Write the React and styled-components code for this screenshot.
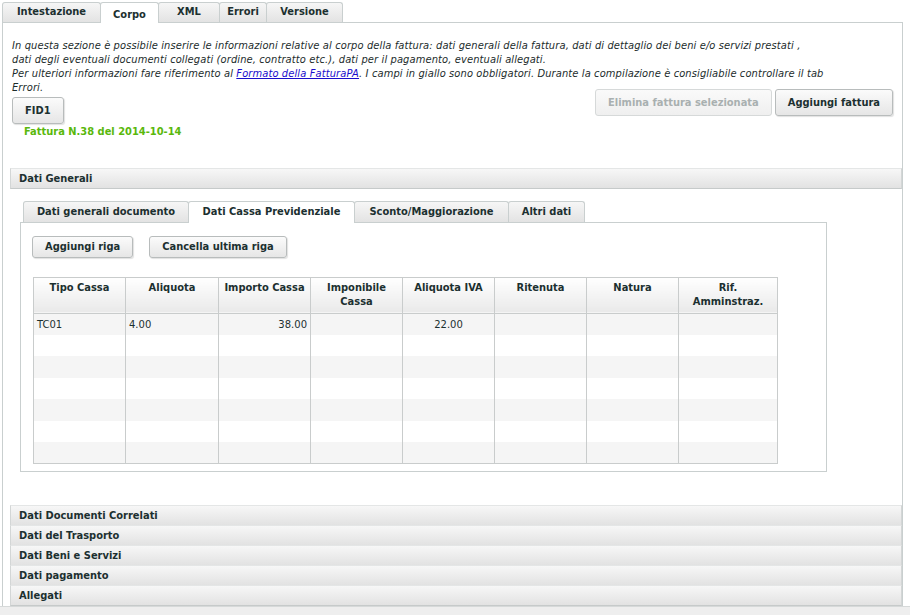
import React from 'react'
import styled, { createGlobalStyle, css } from 'styled-components'

const GlobalStyle = createGlobalStyle`
  body {
    margin: 0;
    background: #ffffff;
    font-family: "DejaVu Sans Condensed", "DejaVu Sans", Verdana, sans-serif;
    font-size: 11px;
    color: #1c3030;
  }
`

const topTabs = [
  { label: 'Intestazione', width: 99 },
  { label: 'Corpo', width: 59 },
  { label: 'XML', width: 62 },
  { label: 'Errori', width: 48 },
  { label: 'Versione', width: 77 },
]

const innerTabs = [
  { label: 'Dati generali documento', width: 166 },
  { label: 'Dati Cassa Previdenziale', width: 167 },
  { label: 'Sconto/Maggiorazione', width: 155 },
  { label: 'Altri dati', width: 77 },
]

const sections = ['Dati Documenti Correlati', 'Dati del Trasporto', 'Dati Beni e Servizi', 'Dati pagamento', 'Allegati']

const columns = [
  { label: 'Tipo Cassa', width: 92, align: 'left' },
  { label: 'Aliquota', width: 93, align: 'left' },
  { label: 'Importo Cassa', width: 92, align: 'right' },
  { label: 'Imponibile\nCassa', width: 92, align: 'center' },
  { label: 'Aliquota IVA', width: 92, align: 'center' },
  { label: 'Ritenuta', width: 92, align: 'center' },
  { label: 'Natura', width: 92, align: 'center' },
  { label: 'Rif.\nAmminstraz.', width: 99, align: 'center' },
]

const rows = [
  ['TC01', '4.00', '38.00', '', '22.00', '', '', ''],
  ['', '', '', '', '', '', '', ''],
  ['', '', '', '', '', '', '', ''],
  ['', '', '', '', '', '', '', ''],
  ['', '', '', '', '', '', '', ''],
  ['', '', '', '', '', '', '', ''],
  ['', '', '', '', '', '', '', ''],
]

const App = () => {
  return (
    <Page>
      <GlobalStyle />
      <TabBar>
        {topTabs.map(t => (
          <Tab key={t.label} $width={t.width} $active={t.label === 'Corpo'}>{t.label}</Tab>
        ))}
      </TabBar>
      <MainPanel>
        <Intro>
          In questa sezione è possibile inserire le informazioni relative al corpo della fattura: dati generali della fattura, dati di dettaglio dei beni e/o servizi prestati ,<br />
          dati degli eventuali documenti collegati (ordine, contratto etc.), dati per il pagamento, eventuali allegati.<br />
          Per ulteriori informazioni fare riferimento al <a href="#">Formato della FatturaPA</a>. I campi in giallo sono obbligatori. Durante la compilazione è consigliabile controllare il tab<br />
          Errori.
        </Intro>
        <ActionsRow>
          <InvoiceCol>
            <Button $tall>FID1</Button>
            <InvoiceLabel>Fattura N.38 del 2014-10-14</InvoiceLabel>
          </InvoiceCol>
          <ButtonGroup>
            <Button $tall disabled>Elimina fattura selezionata</Button>
            <Button $tall>Aggiungi fattura</Button>
          </ButtonGroup>
        </ActionsRow>

        <Accordion>
          <AccordionHeader>Dati Generali</AccordionHeader>
          <AccordionBody>
            <InnerTabBar>
              {innerTabs.map(t => (
                <InnerTab key={t.label} $width={t.width} $active={t.label === 'Dati Cassa Previdenziale'}>{t.label}</InnerTab>
              ))}
            </InnerTabBar>
            <TabPanel>
              <ButtonGroup $left>
                <Button>Aggiungi riga</Button>
                <Button>Cancella ultima riga</Button>
              </ButtonGroup>
              <Grid>
                <colgroup>
                  {columns.map(c => (
                    <col key={c.label} style={{ width: c.width }} />
                  ))}
                </colgroup>
                <thead>
                  <tr>
                    {columns.map(c => (
                      <HeadCell key={c.label}>{c.label}</HeadCell>
                    ))}
                  </tr>
                </thead>
                <tbody>
                  {rows.map((r, i) => (
                    <Row key={i} $odd={i % 2 === 0}>
                      {r.map((v, j) => (
                        <Cell key={j} $align={columns[j].align}>{v}</Cell>
                      ))}
                    </Row>
                  ))}
                </tbody>
              </Grid>
            </TabPanel>
          </AccordionBody>
          {sections.map(s => (
            <AccordionHeader key={s}>{s}</AccordionHeader>
          ))}
        </Accordion>
      </MainPanel>
      <Footer />
    </Page>
  )
}

const Page = styled.div`
  width: 910px;
  height: 615px;
  display: flex;
  flex-direction: column;
  overflow: hidden;
`

const tabBase = css`
  display: flex;
  align-items: center;
  justify-content: center;
  box-sizing: border-box;
  font-weight: bold;
  border: 1px solid #c9cfcf;
  border-bottom: none;
  border-radius: 3px 3px 0 0;
  color: #1c3030;
  background: linear-gradient(#f6f6f6, #e3e3e3);
  white-space: nowrap;
`

const TabBar = styled.div`
  display: flex;
  align-items: flex-end;
  height: 22px;
  padding-left: 2px;
  margin-right: 7px;
`

const Tab = styled.div`
  ${tabBase};
  width: ${p => p.$width}px;
  height: 20px;
  padding-bottom: 2px;
  margin-right: -1px;
  ${p => p.$active && css`
    background: #ffffff;
    height: 21px;
    padding-top: 3px;
    padding-bottom: 0;
    margin-bottom: -1px;
    position: relative;
    z-index: 1;
  `}
`

const MainPanel = styled.div`
  flex: 1;
  margin: 0 7px 0 2px;
  border: 1px solid #c9cfcf;
  border-bottom: none;
  padding: 16px 0 0 7px;
  display: flex;
  flex-direction: column;
`

const Intro = styled.p`
  margin: 0 0 0 2px;
  font-style: italic;
  line-height: 14px;
  letter-spacing: 0.12px;
  color: #1c2c2c;
  a {
    color: #1a0dcc;
  }
`

const ActionsRow = styled.div`
  display: flex;
  justify-content: space-between;
  align-items: flex-start;
  margin-top: -6px;
  padding: 0 9px 0 2px;
`

const InvoiceCol = styled.div`
  display: flex;
  flex-direction: column;
  align-items: flex-start;
  padding-top: 8px;
`

const InvoiceLabel = styled.div`
  margin: 1px 0 0 12px;
  font-weight: bold;
  color: #5ab80c;
`

const ButtonGroup = styled.div`
  display: flex;
  gap: ${p => (p.$left ? '16px' : '3px')};
`

const Button = styled.button`
  font-family: inherit;
  font-size: 11px;
  font-weight: bold;
  color: #1c3030;
  height: ${p => (p.$tall ? '27px' : '22px')};
  padding: 0 12px;
  border: 1px solid #b8bcbc;
  border-radius: 3px;
  background: linear-gradient(#fbfbfb, #e6e6e6);
  box-shadow: 1px 1px 1px rgba(0, 0, 0, 0.12);
  &:disabled {
    color: #a9b0b0;
    border-color: #d6d9d9;
    background: linear-gradient(#fafafa, #efefef);
    box-shadow: none;
  }
`

const Accordion = styled.div`
  margin-top: 30px;
  display: flex;
  flex-direction: column;
`

const AccordionHeader = styled.div`
  height: 19px;
  display: flex;
  align-items: center;
  padding-left: 8px;
  font-weight: bold;
  color: #1c3030;
  border: 1px solid #d3d6d6;
  border-top-color: #e4e6e6;
  border-bottom: 1px solid #c6caca;
  background: linear-gradient(#f7f7f7, #e2e2e2);
  margin-top: -1px;
  &:first-child {
    margin-top: 0;
  }
`

const AccordionBody = styled.div`
  padding: 12px 0 34px 10px;
  background: #ffffff;
`

const InnerTabBar = styled.div`
  display: flex;
  align-items: flex-end;
  height: 21px;
  padding-left: 3px;
`

const InnerTab = styled.div`
  ${tabBase};
  width: ${p => p.$width}px;
  height: 21px;
  margin-right: -1px;
  ${p => p.$active && css`
    background: #ffffff;
    height: 22px;
    padding-bottom: 1px;
    margin-bottom: -1px;
    position: relative;
    z-index: 1;
  `}
`

const TabPanel = styled.div`
  box-sizing: border-box;
  width: 807px;
  border: 1px solid #c9cfcf;
  padding: 13px 0 7px 11px;
  display: flex;
  flex-direction: column;
  align-items: flex-start;
  gap: 19px;
`

const Grid = styled.table`
  width: 744px;
  margin-left: 1px;
  border-collapse: collapse;
  border: 1px solid #c9cccc;
  table-layout: fixed;
`

const HeadCell = styled.th`
  height: 32px;
  padding: 3px 4px 0;
  vertical-align: top;
  text-align: center;
  white-space: pre-line;
  font-weight: bold;
  line-height: 14px;
  color: #1c3030;
  border: 1px solid #c9cccc;
  background: linear-gradient(#ffffff, #e9e9e9);
`

const Row = styled.tr`
  height: 21.5px;
  background: ${p => (p.$odd ? '#f5f5f5' : '#ffffff')};
`

const Cell = styled.td`
  padding: 0 3px;
  text-align: ${p => p.$align};
  font-family: "DejaVu Sans", Verdana, sans-serif;
  font-size: 10px;
  color: #1c3030;
  border-left: 1px solid #c9cccc;
  border-right: 1px solid #c9cccc;
`

const Footer = styled.div`
  height: 8px;
  background: #eeeeee;
  border-top: 1px solid #d6d9d9;
`

export default App
